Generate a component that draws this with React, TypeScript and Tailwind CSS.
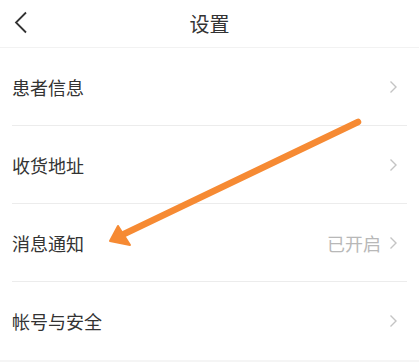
import React from "react";

const Chevron = () => (
  <svg width="9" height="14" viewBox="0 0 9 14" className="ml-[8px] mr-[9px]">
    <path d="M1.5 1.5 L7 7 L1.5 12.5" fill="none" stroke="#c4c4c4" strokeWidth="1.4" />
  </svg>
);

const Row = ({ label, value, last }: { label: string; value?: string; last?: boolean }) => (
  <div className="px-[12px] bg-white">
    <div className={`h-[78px] flex items-center ${last ? "" : "border-b border-[#ececec]"}`}>
      <span className="text-[18px] text-[#333333] flex-1 leading-none">{label}</span>
      {value && <span className="text-[18px] text-[#b8b8b8] leading-none">{value}</span>}
      <Chevron />
    </div>
  </div>
);

export default function App() {
  return (
    <div
      className="relative w-[419px] h-[362px] bg-[#f5f5f5] overflow-hidden"
      style={{ fontFamily: '"Noto Sans CJK SC", "Noto Sans", sans-serif' }}
    >
      <div className="h-[48px] bg-white relative flex items-center justify-center border-b border-[#f2f2f2]">
        <svg width="14" height="24" viewBox="0 0 14 24" className="absolute left-[14px] top-[11px]">
          <path d="M12 1.5 L2 11.5 L12 21.5" fill="none" stroke="#333" strokeWidth="1.8" />
        </svg>
        <span className="text-[20px] text-[#333333] leading-none">设置</span>
      </div>
      <div className="bg-white">
        <Row label="患者信息" />
        <Row label="收货地址" />
        <Row label="消息通知" value="已开启" />
        <Row label="帐号与安全" last />
      </div>
      <svg className="absolute left-0 top-0" width="419" height="362" viewBox="0 0 419 362">
        <line x1="358" y1="122" x2="124" y2="234" stroke="#f68a33" strokeWidth="6.5" strokeLinecap="round" />
        <polygon points="110,241 118,226 130,245" fill="#f68a33" stroke="#f68a33" strokeWidth="2" strokeLinejoin="round" />
      </svg>
    </div>
  );
}
